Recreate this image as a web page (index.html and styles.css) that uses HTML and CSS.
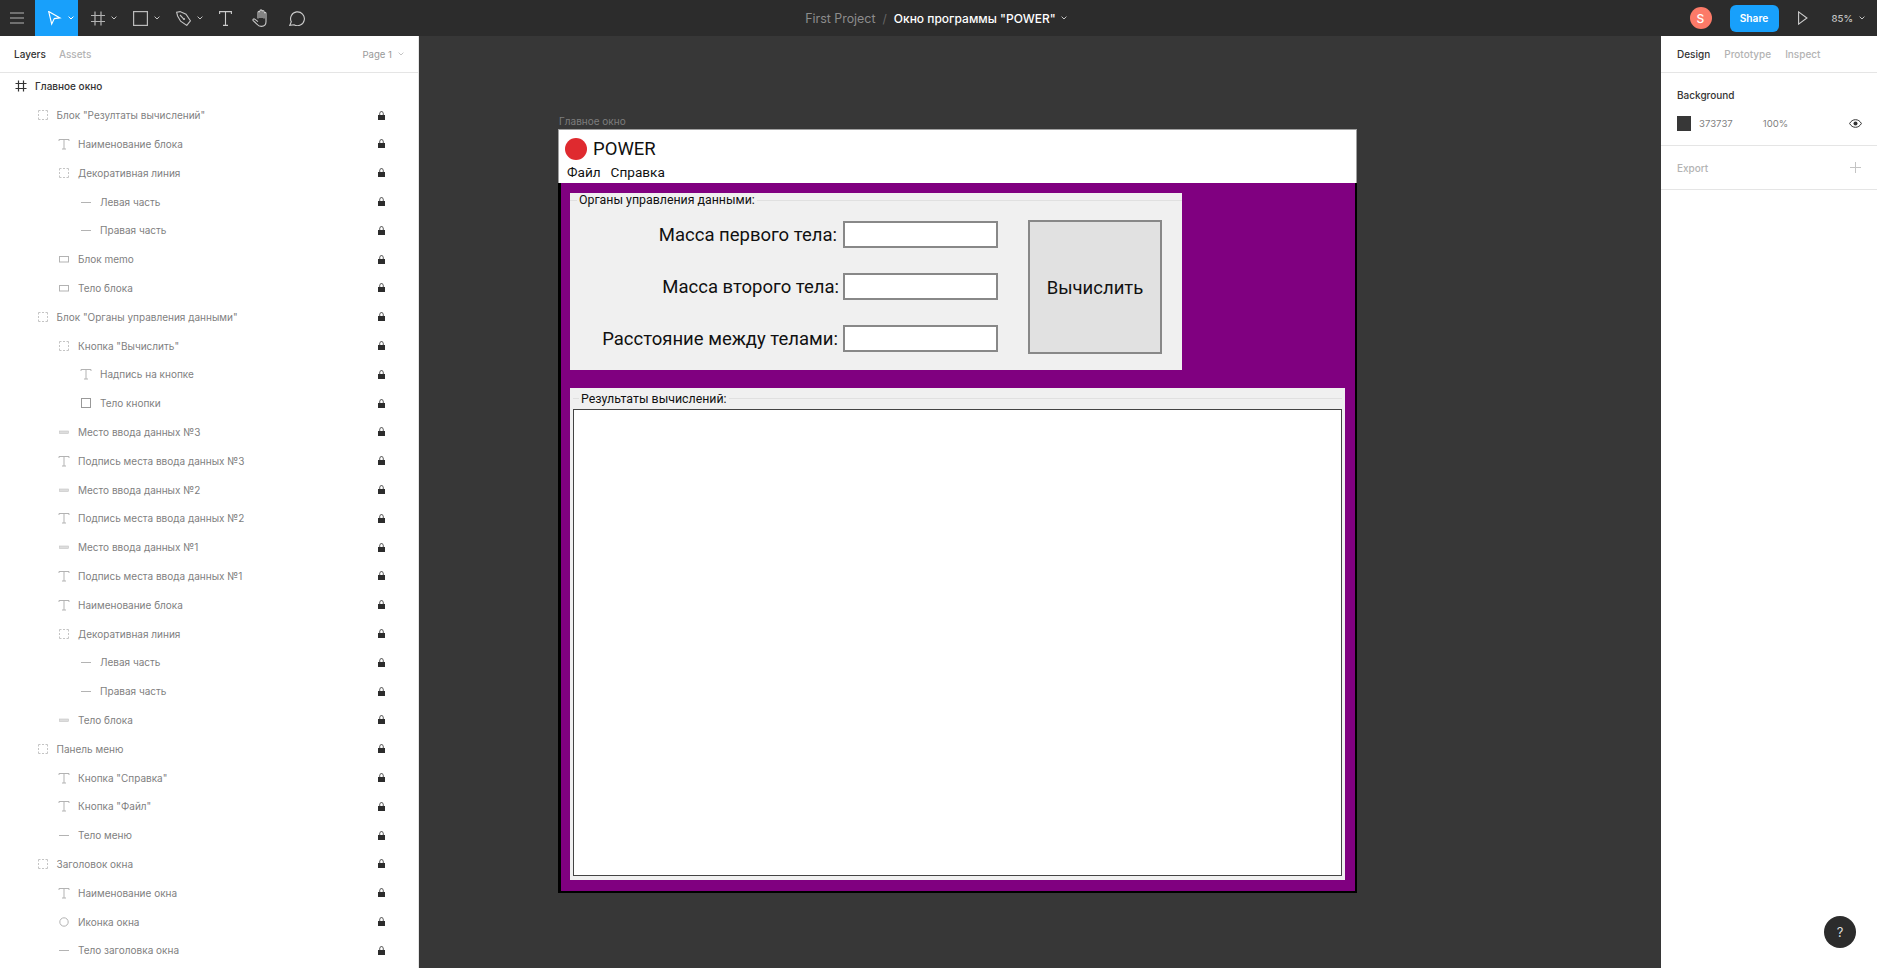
FILE: index.html
```html
<!DOCTYPE html>
<html lang="ru">
<head>
  <meta charset="UTF-8" />
  <title>Окно программы "POWER"</title>
  <link rel="stylesheet" href="styles.css">
</head>
<body>
  <!-- icons used by the layer rows -->
  <svg class="defs" width="0" height="0">
    <symbol id="i-frame" viewBox="0 0 14 14"><path d="M4.5 1.5v11M9.5 1.5v11M1.5 4.5h11M1.5 9.5h11" fill="none" stroke="#333" stroke-width="1.2"/></symbol>
    <symbol id="i-group" viewBox="0 0 14 14"><path d="M2.5 2.5h2M6 2.5h2M9.5 2.5h2M2.5 11.5h2M6 11.5h2M9.5 11.5h2M2.5 2.5v2M2.5 6v2M2.5 9.5v2M11.5 2.5v2M11.5 6v2M11.5 9.5v2" fill="none" stroke="#c4c4c4" stroke-width="1"/></symbol>
    <symbol id="i-text" viewBox="0 0 14 14"><path d="M2 4V2.5h10V4M7 2.5v9.5M5 12h4" fill="none" stroke="#b3b3b3" stroke-width="1"/></symbol>
    <symbol id="i-line" viewBox="0 0 14 14"><path d="M2 7.5h10" stroke="#b3b3b3" stroke-width="1"/></symbol>
    <symbol id="i-box" viewBox="0 0 14 14"><rect x="2.5" y="4.5" width="9" height="5.5" fill="none" stroke="#b3b3b3"/></symbol>
    <symbol id="i-bar" viewBox="0 0 14 14"><rect x="2.5" y="6" width="9" height="2.5" fill="#ddd" stroke="#c4c4c4" stroke-width=".6"/></symbol>
    <symbol id="i-square" viewBox="0 0 14 14"><rect x="2.5" y="2.5" width="9" height="9" fill="none" stroke="#999"/></symbol>
    <symbol id="i-circle" viewBox="0 0 14 14"><circle cx="7" cy="7" r="4.2" fill="none" stroke="#b3b3b3"/></symbol>
    <symbol id="i-lock" viewBox="0 0 7 9"><path d="M0 4h7v5H0zM1.4 4V2.4a2.1 2.1 0 0 1 4.2 0V4" fill="#2c2c2c"/><path d="M2.2 4V2.4a1.3 1.3 0 0 1 2.6 0V4z" fill="#fff"/></symbol>
    <symbol id="i-chev" viewBox="0 0 6 4"><path d="M.6.6 3 3 5.4.6" fill="none" stroke="currentColor" stroke-width="1"/></symbol>
  </svg>

  <header class="topbar">
    <div class="tools">
      <div class="tool tool-menu">
        <svg width="14" height="12" viewBox="0 0 14 12"><path d="M0 1h14M0 6h14M0 11h14" stroke="#b3b3b3" stroke-width="1.2"/></svg>
      </div>
      <div class="tool tool-drop is-active">
        <svg width="15" height="15" viewBox="0 0 15 15"><path d="M1.7.6 13 6.9 7.3 7.6 4.7 13z" fill="none" stroke="#fff" stroke-width="1.1"/></svg>
        <svg class="chev" width="6" height="4"><use href="#i-chev"/></svg>
      </div>
      <div class="tool tool-drop">
        <svg width="15" height="15" viewBox="0 0 15 15"><path d="M5 .5v14M11 .5v14M1 4.5h14M1 10.5h14" fill="none" stroke="#b3b3b3" stroke-width="1.2"/></svg>
        <svg class="chev" width="6" height="4"><use href="#i-chev"/></svg>
      </div>
      <div class="tool tool-drop">
        <svg width="15" height="15" viewBox="0 0 15 15"><rect x=".6" y=".6" width="13.8" height="13.8" fill="none" stroke="#bbb" stroke-width="1.2"/></svg>
        <svg class="chev" width="6" height="4"><use href="#i-chev"/></svg>
      </div>
      <div class="tool tool-drop">
        <svg width="15" height="15" viewBox="0 0 15 15"><path d="M.6 1.2 4 .6l6 2.6 4.4 6.6-3.6 4.6-6.2-4.2L1.6 5zM4 4l3.6 3.8" fill="none" stroke="#c4c4c4" stroke-width="1.1"/><circle cx="8" cy="8" r="1.1" fill="#c4c4c4"/></svg>
        <svg class="chev" width="6" height="4"><use href="#i-chev"/></svg>
      </div>
      <div class="tool tool-plain">
        <svg width="13" height="15" viewBox="0 0 13 15"><path d="M.6 3V.6h11.8V3M6.5.6v13.8M4 14.4h5" fill="none" stroke="#ccc" stroke-width="1.1"/></svg>
      </div>
      <div class="tool tool-plain">
        <svg width="18" height="18" viewBox="0 0 18 18"><path d="M6 9.5V3.4a1 1 0 0 1 2 0V9V1.9a1 1 0 0 1 2 0V9V2.6a1 1 0 0 1 2 0V9.5V4.4a1 1 0 0 1 2 0v8.4c0 2.6-1.7 4.6-4.6 4.6-2.300 0-3.400-.8-4.600-2.400L1.200 11.600c-.7-1 .5-2.200 1.500-1.500L6 12.600" fill="none" stroke="#ccc" stroke-width="1.1"/></svg>
      </div>
      <div class="tool tool-plain">
        <svg width="16" height="15" viewBox="0 0 16 15"><path d="M.8 14.300l1.500-3.500A6.900 6.900 0 1 1 5 13.700z" fill="none" stroke="#ccc" stroke-width="1.1"/></svg>
      </div>
    </div>
    <div class="doc-title">
      <span class="doc-project">First Project</span>
      <span class="doc-slash">/</span>
      <span class="doc-name">Окно программы "POWER"</span>
      <svg class="chev" width="6" height="4"><use href="#i-chev"/></svg>
    </div>
    <div class="top-right">
      <div class="avatar">S</div>
      <div class="share">Share</div>
      <svg class="play" width="10" height="14" viewBox="0 0 10 14"><path d="M.6.9 8.900 7 .6 13.100z" fill="none" stroke="#ccc" stroke-width="1.1"/></svg>
      <span class="zoom">85%</span>
      <svg class="chev" width="6" height="4"><use href="#i-chev"/></svg>
    </div>
  </header>

  <main class="workspace">
    <aside class="left-panel">
      <div class="panel-tabs">
        <span class="tab is-current">Layers</span>
        <span class="tab tab-assets">Assets</span>
        <span class="page-pick">Page 1 <svg class="chev" width="6" height="4"><use href="#i-chev"/></svg></span>
      </div>
      <div class="layers">
        <div class="row d0"><svg class="ico"><use href="#i-frame"/></svg><span>Главное окно</span></div>
        <div class="row d1"><svg class="ico"><use href="#i-group"/></svg><span>Блок "Резултаты вычислений"</span><svg class="lock"><use href="#i-lock"/></svg></div>
        <div class="row d2"><svg class="ico"><use href="#i-text"/></svg><span>Наименование блока</span><svg class="lock"><use href="#i-lock"/></svg></div>
        <div class="row d2"><svg class="ico"><use href="#i-group"/></svg><span>Декоративная линия</span><svg class="lock"><use href="#i-lock"/></svg></div>
        <div class="row d3"><svg class="ico"><use href="#i-line"/></svg><span>Левая часть</span><svg class="lock"><use href="#i-lock"/></svg></div>
        <div class="row d3"><svg class="ico"><use href="#i-line"/></svg><span>Правая часть</span><svg class="lock"><use href="#i-lock"/></svg></div>
        <div class="row d2"><svg class="ico"><use href="#i-box"/></svg><span>Блок memo</span><svg class="lock"><use href="#i-lock"/></svg></div>
        <div class="row d2"><svg class="ico"><use href="#i-box"/></svg><span>Тело блока</span><svg class="lock"><use href="#i-lock"/></svg></div>
        <div class="row d1"><svg class="ico"><use href="#i-group"/></svg><span>Блок "Органы управления данными"</span><svg class="lock"><use href="#i-lock"/></svg></div>
        <div class="row d2"><svg class="ico"><use href="#i-group"/></svg><span>Кнопка "Вычислить"</span><svg class="lock"><use href="#i-lock"/></svg></div>
        <div class="row d3"><svg class="ico"><use href="#i-text"/></svg><span>Надпись на кнопке</span><svg class="lock"><use href="#i-lock"/></svg></div>
        <div class="row d3"><svg class="ico"><use href="#i-square"/></svg><span>Тело кнопки</span><svg class="lock"><use href="#i-lock"/></svg></div>
        <div class="row d2"><svg class="ico"><use href="#i-bar"/></svg><span>Место ввода данных №3</span><svg class="lock"><use href="#i-lock"/></svg></div>
        <div class="row d2"><svg class="ico"><use href="#i-text"/></svg><span>Подпись места ввода данных №3</span><svg class="lock"><use href="#i-lock"/></svg></div>
        <div class="row d2"><svg class="ico"><use href="#i-bar"/></svg><span>Место ввода данных №2</span><svg class="lock"><use href="#i-lock"/></svg></div>
        <div class="row d2"><svg class="ico"><use href="#i-text"/></svg><span>Подпись места ввода данных №2</span><svg class="lock"><use href="#i-lock"/></svg></div>
        <div class="row d2"><svg class="ico"><use href="#i-bar"/></svg><span>Место ввода данных №1</span><svg class="lock"><use href="#i-lock"/></svg></div>
        <div class="row d2"><svg class="ico"><use href="#i-text"/></svg><span>Подпись места ввода данных №1</span><svg class="lock"><use href="#i-lock"/></svg></div>
        <div class="row d2"><svg class="ico"><use href="#i-text"/></svg><span>Наименование блока</span><svg class="lock"><use href="#i-lock"/></svg></div>
        <div class="row d2"><svg class="ico"><use href="#i-group"/></svg><span>Декоративная линия</span><svg class="lock"><use href="#i-lock"/></svg></div>
        <div class="row d3"><svg class="ico"><use href="#i-line"/></svg><span>Левая часть</span><svg class="lock"><use href="#i-lock"/></svg></div>
        <div class="row d3"><svg class="ico"><use href="#i-line"/></svg><span>Правая часть</span><svg class="lock"><use href="#i-lock"/></svg></div>
        <div class="row d2"><svg class="ico"><use href="#i-bar"/></svg><span>Тело блока</span><svg class="lock"><use href="#i-lock"/></svg></div>
        <div class="row d1"><svg class="ico"><use href="#i-group"/></svg><span>Панель меню</span><svg class="lock"><use href="#i-lock"/></svg></div>
        <div class="row d2"><svg class="ico"><use href="#i-text"/></svg><span>Кнопка "Справка"</span><svg class="lock"><use href="#i-lock"/></svg></div>
        <div class="row d2"><svg class="ico"><use href="#i-text"/></svg><span>Кнопка "Файл"</span><svg class="lock"><use href="#i-lock"/></svg></div>
        <div class="row d2"><svg class="ico"><use href="#i-line"/></svg><span>Тело меню</span><svg class="lock"><use href="#i-lock"/></svg></div>
        <div class="row d1"><svg class="ico"><use href="#i-group"/></svg><span>Заголовок окна</span><svg class="lock"><use href="#i-lock"/></svg></div>
        <div class="row d2"><svg class="ico"><use href="#i-text"/></svg><span>Наименование окна</span><svg class="lock"><use href="#i-lock"/></svg></div>
        <div class="row d2"><svg class="ico"><use href="#i-circle"/></svg><span>Иконка окна</span><svg class="lock"><use href="#i-lock"/></svg></div>
        <div class="row d2"><svg class="ico"><use href="#i-line"/></svg><span>Тело заголовка окна</span><svg class="lock"><use href="#i-lock"/></svg></div>
      </div>
    </aside>

    <section class="canvas">
      <div class="frame-label">Главное окно</div>
      <div class="app-window">
        <div class="app-title">
          <div class="app-icon"></div>
          <span class="app-name">POWER</span>
        </div>
        <div class="app-menu"><span>Файл</span><span>Справка</span></div>
        <div class="app-body">
          <div class="group group-controls">
            <div class="group-head"><span>Органы управления данными:</span></div>
            <div class="controls">
              <div class="fields">
                <div class="field-row"><label class="lbl-first">Масса первого тела:</label><input class="field" type="text"></div>
                <div class="field-row"><label class="lbl-second">Масса второго тела:</label><input class="field" type="text"></div>
                <div class="field-row"><label class="lbl-third">Расстояние между телами:</label><input class="field" type="text"></div>
              </div>
              <div class="calc-btn">Вычислить</div>
            </div>
          </div>
          <div class="group group-results">
            <div class="group-head"><span>Результаты вычислений:</span></div>
            <div class="memo"></div>
          </div>
        </div>
      </div>
    </section>

    <aside class="right-panel">
      <div class="panel-tabs right-tabs">
        <span class="tab is-current">Design</span>
        <span class="tab">Prototype</span>
        <span class="tab">Inspect</span>
      </div>
      <div class="section">
        <div class="section-title">Background</div>
        <div class="bg-row">
          <div class="swatch"></div>
          <span class="bg-hex">373737</span>
          <span class="bg-opacity">100%</span>
          <svg class="eye" width="13" height="9" viewBox="0 0 13 9"><path d="M.6 4.500C2 2 4 .7 6.500.7S11 2 12.400 4.500C11 7 9 8.300 6.500 8.300S2 7 .6 4.500z" fill="none" stroke="#333" stroke-width="1"/><circle cx="6.500" cy="4.500" r="2" fill="#333"/></svg>
        </div>
      </div>
      <div class="section section-export">
        <span class="section-title is-muted">Export</span>
        <svg width="11" height="11" viewBox="0 0 11 11"><path d="M5.500 0v11M0 5.500h11" stroke="#c4c4c4" stroke-width="1"/></svg>
      </div>
    </aside>
  </main>

  <div class="help">?</div>
</body>
</html>
```

FILE: styles.css
```css
* {
  box-sizing: border-box;
}

body {
  display: flex;
  flex-direction: column;
  height: 100vh;
  margin: 0;
  overflow: hidden;
  background-color: #373737;
  font-family: Inter, "Liberation Sans", sans-serif;
  font-size: 10px;
  color: #333;
}

.defs {
  position: absolute;
}

.chev {
  flex: none;
  color: #c4c4c4;
}

/* top bar */
.topbar {
  display: grid;
  grid-template-columns: 1fr auto 1fr;
  align-items: center;
  flex: none;
  height: 36px;
  background-color: #2c2c2c;
}

.tools {
  display: flex;
  height: 36px;
}

.tool {
  display: flex;
  align-items: center;
  height: 36px;
}

.tool-menu {
  width: 35px;
  padding-left: 10px;
}

.tool-drop {
  width: 43px;
  padding-left: 12px;
  gap: 6px;
}

.tool-plain {
  width: 36px;
  justify-content: center;
}

.is-active {
  background-color: #18a0fb;
}

.is-active .chev {
  color: #fff;
}

.doc-title {
  display: flex;
  align-items: center;
  padding-right: 5px;
  font-size: 12px;
}

.doc-project {
  color: #8c8c8c;
  font-size: 12.4px;
}

.doc-slash {
  margin: 0 7px;
  color: #666;
}

.doc-name {
  margin-right: 5px;
  color: #fff;
  font-weight: 500;
}

.top-right {
  display: flex;
  align-items: center;
  justify-content: flex-end;
  padding-right: 12px;
}

.avatar {
  display: flex;
  align-items: center;
  justify-content: center;
  width: 22px;
  height: 22px;
  border-radius: 50%;
  background-color: #fc7a68;
  color: #fff;
  font-size: 12px;
  font-weight: 500;
}

.share {
  display: flex;
  align-items: center;
  justify-content: center;
  width: 49px;
  height: 27px;
  margin-left: 18px;
  border-radius: 6px;
  background-color: #18a0fb;
  color: #fff;
  font-size: 10.2px;
  font-weight: 600;
}

.play {
  margin-left: 19px;
}

.zoom {
  margin-left: 24px;
  margin-right: 6px;
  color: #c4c4c4;
  font-size: 9.6px;
  font-weight: 500;
}

/* three columns under the bar */
.workspace {
  display: flex;
  flex: 1;
  min-height: 0;
}

.left-panel {
  flex: none;
  width: 419px;
  background-color: #fff;
  border-right: 1px solid #e5e5e5;
}

.right-panel {
  flex: none;
  width: 216px;
  margin-left: auto;
  background-color: #fff;
}

.panel-tabs {
  display: flex;
  align-items: center;
  height: 37px;
  padding-left: 14px;
  border-bottom: 1px solid #e5e5e5;
  font-size: 10px;
  font-weight: 500;
}

.tab {
  color: #b3b3b3;
}

.tab.is-current {
  color: #333;
}

.tab-assets {
  margin-left: 13px;
}

.page-pick {
  display: flex;
  align-items: center;
  gap: 6px;
  margin-left: auto;
  margin-right: 14px;
  color: #999;
  font-size: 9.6px;
  font-weight: 400;
}

/* layers */
.layers {
  margin-top: -1px;
}

.row {
  display: flex;
  align-items: center;
  height: 28.8px;
  color: #7f7f7f;
  white-space: nowrap;
}

.ico {
  flex: none;
  width: 14px;
  height: 14px;
  margin-right: 7px;
}

.lock {
  flex: none;
  width: 7px;
  height: 9px;
  margin-left: auto;
  margin-right: 33px;
}

.d0 {
  padding-left: 14px;
  color: #333;
  font-weight: 500;
}

.d1 {
  padding-left: 35.5px;
}

.d2 {
  padding-left: 57px;
}

.d3 {
  padding-left: 79px;
}

/* canvas */
.canvas {
  flex: none;
  padding-top: 78px;
  padding-left: 139px;
}

.frame-label {
  height: 15px;
  padding-left: 1px;
  line-height: 15px;
  font-size: 10px;
  color: #7d7d7d;
}

.app-window {
  width: 799px;
  font-family: Roboto, "Liberation Sans", sans-serif;
  color: #111;
}

.app-title {
  display: flex;
  align-items: center;
  height: 35px;
  padding: 3px 0 0 6px;
  background-color: #fff;
  border: 1px solid #a0a0a0;
  border-bottom: 0;
}

.app-icon {
  width: 22px;
  height: 22px;
  border-radius: 50%;
  background-color: #df2a2f;
}

.app-name {
  margin-left: 6px;
  font-size: 18.5px;
}

.app-menu {
  display: flex;
  gap: 10px;
  height: 19px;
  padding: 1px 0 0 8px;
  line-height: 15px;
  background-color: #fff;
  border-left: 1px solid #a0a0a0;
  border-right: 1px solid #a0a0a0;
  font-size: 13.6px;
}

.app-body {
  padding: 10px 0 11px 9px;
  background-color: #800080;
  border: solid #000;
  border-width: 0 2px 2px 3px;
}

.group {
  background-color: #f0f0f0;
}

.group-controls {
  width: 612px;
  height: 177px;
}

.group-results {
  width: 775px;
  height: 492px;
  margin-top: 18px;
  padding: 0 3px;
}

.group-head {
  display: flex;
  align-items: center;
  gap: 2px;
  height: 14px;
  font-size: 12.35px;
}

.group-head::before {
  content: "";
  width: 7px;
  height: 1px;
  background-color: #e0e0e0;
}

.group-head::after {
  content: "";
  flex: 1;
  height: 1px;
  background-color: #e0e0e0;
}

.group-results .group-head {
  height: 21px;
}

.group-results .group-head::before {
  width: 6px;
}

.controls {
  display: flex;
  align-items: flex-start;
  padding-top: 13px;
}

.fields {
  display: flex;
  flex-direction: column;
  gap: 25px;
  width: 428px;
  padding-top: 1px;
}

.field-row {
  display: flex;
  align-items: center;
  justify-content: flex-end;
  font-size: 18.5px;
}

.lbl-first {
  margin-right: 6px;
}

.lbl-second {
  margin-right: 4px;
}

.lbl-third {
  margin-right: 5px;
}

.field {
  width: 155px;
  height: 27px;
  margin: 0;
  padding: 0;
  background-color: #fff;
  border: 2px solid #888;
  border-radius: 0;
  outline: none;
}

.calc-btn {
  display: flex;
  align-items: center;
  justify-content: center;
  width: 134px;
  height: 134px;
  margin-left: 30px;
  padding-top: 2px;
  background-color: #e1e1e1;
  border: 2px solid #888;
  font-size: 18.5px;
}

.memo {
  height: 467px;
  background-color: #fff;
  border: 1.5px solid #444;
}

/* right panel */
.right-tabs {
  gap: 14px;
  padding-left: 16px;
}

.section {
  height: 73px;
  padding: 16px 16px 0;
  border-bottom: 1px solid #e5e5e5;
}

.section-title {
  font-size: 10px;
  font-weight: 500;
  color: #333;
}

.section-title.is-muted {
  color: #b3b3b3;
}

.bg-row {
  display: flex;
  align-items: center;
  margin-top: 15px;
  color: #7f7f7f;
  font-size: 9.6px;
}

.swatch {
  width: 14px;
  height: 15px;
  margin-right: 8px;
  background-color: #373737;
}

.bg-opacity {
  margin-left: 30px;
}

.eye {
  margin-left: auto;
  margin-right: -1px;
}

.section-export {
  display: flex;
  align-items: center;
  justify-content: space-between;
  height: 44px;
  padding-top: 0;
}

.help {
  position: absolute;
  left: 1824px;
  top: 916px;
  width: 32px;
  height: 32px;
  border-radius: 50%;
  background-color: #2c2c2c;
  color: #ddd;
  font-size: 13px;
  line-height: 32px;
  text-align: center;
}
```
